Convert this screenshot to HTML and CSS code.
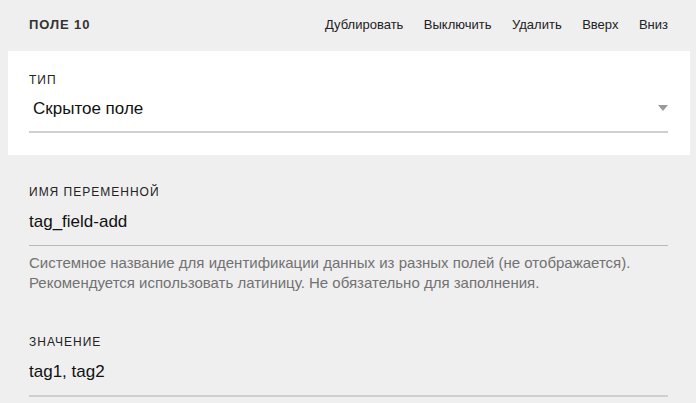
FILE: index.html
```html
<!DOCTYPE html>
<html lang="ru">
<head>
<meta charset="utf-8">
<title>Поле 10</title>
<link rel="stylesheet" href="styles.css">
</head>
<body>
<div class="page">
  <div class="header">
    <div class="title">ПОЛЕ 10</div>
    <nav class="actions">
      <a href="#">Дублировать</a>
      <a href="#">Выключить</a>
      <a href="#">Удалить</a>
      <a href="#">Вверх</a>
      <a href="#">Вниз</a>
    </nav>
  </div>
  <div class="card">
    <div class="label">ТИП</div>
    <div class="select">
      <span class="select-value">Скрытое поле</span>
      <svg class="caret" width="10" height="6" viewBox="0 0 10 6"><path d="M0 0H10L5 6Z" fill="#9a9a9a"/></svg>
    </div>
  </div>
  <div class="section">
    <div class="label">ИМЯ ПЕРЕМЕННОЙ</div>
    <div class="input thin">tag_field-add</div>
    <div class="help">Системное название для идентификации данных из разных полей (не отображается).<br>Рекомендуется использовать латиницу. Не обязательно для заполнения.</div>
  </div>
  <div class="section second">
    <div class="label">ЗНАЧЕНИЕ</div>
    <div class="input">tag1, tag2</div>
  </div>
</div>
</body>
</html>
```
FILE: styles.css
```css
html, body {
  margin: 0;
  padding: 0;
  background: #efefef;
}
body {
  font-family: "Liberation Sans", Arial, sans-serif;
  color: #111;
  overflow: hidden;
}
.page {
  display: flex;
  flex-direction: column;
}
.header {
  display: flex;
  justify-content: space-between;
  align-items: flex-start;
  height: 51px;
  box-sizing: border-box;
  padding: 17px 28px 0 29px;
  line-height: 15px;
}
.title {
  font-size: 13px;
  font-weight: bold;
  letter-spacing: 0.9px;
  color: #333;
}
.actions {
  display: flex;
  gap: 20.5px;
}
.actions a {
  font-size: 13px;
  color: #222;
  text-decoration: none;
}
.card {
  background: #fff;
  margin: 0 6px 0 8px;
  padding: 22px 22px 22px 21px;
}
.label {
  font-size: 12px;
  line-height: 14px;
  letter-spacing: 1px;
  color: #222;
}
.select {
  display: flex;
  justify-content: space-between;
  align-items: center;
  margin-top: 12px;
  padding: 0 0 12px 4px;
  border-bottom: 2px solid #cfcfcf;
}
.select-value, .input {
  font-size: 17px;
  line-height: 20px;
  color: #111;
}
.caret {
  display: block;
  margin-top: -2px;
}
.section {
  padding: 30px 28px 0 29px;
}
.section.second {
  padding-top: 42px;
}
.input {
  margin-top: 13px;
  padding-bottom: 13px;
  border-bottom: 2px solid #cfcfcf;
}
.input.thin {
  border-bottom: 1px solid #b9b9b9;
}
.help {
  margin-top: 7px;
  font-size: 15px;
  line-height: 20px;
  color: #727272;
}
```
